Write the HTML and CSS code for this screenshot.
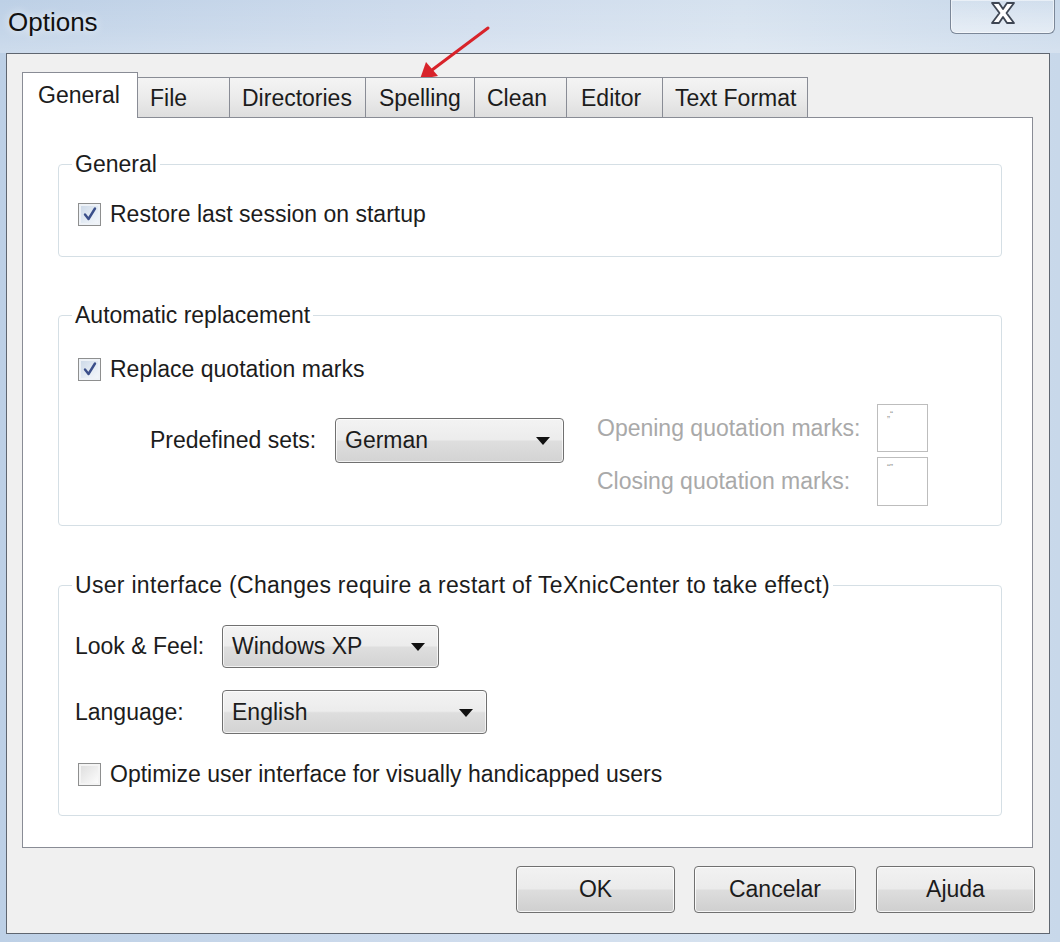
FILE: index.html
```html
<!DOCTYPE html>
<html>
<head>
<meta charset="utf-8">
<link rel="stylesheet" href="styles.css">
</head>
<body>
<div class="window">
  <div class="titlebar">
    <span class="title">Options</span>
    <div class="close">
      <svg width="28" height="24" viewBox="0 0 28 24"><path d="M3 2 H10 L14 8 L18 2 H25 L17.5 12 L25 22 H18 L14 16 L10 22 H3 L10.5 12 Z" fill="#fff" stroke="#3f4754" stroke-width="1.8" stroke-linejoin="round"/></svg>
    </div>
  </div>
  <div class="dialog">
    <div class="tabs">
      <div class="tab active t-general">General</div>
      <div class="tab t-file">File</div>
      <div class="tab t-dir">Directories</div>
      <div class="tab t-spell">Spelling</div>
      <div class="tab t-clean">Clean</div>
      <div class="tab t-editor">Editor</div>
      <div class="tab t-text">Text Format</div>
    </div>
    <div class="panel">
      <fieldset class="group g1">
        <legend>General</legend>
        <div class="check"><span class="box checked"><svg width="16" height="16" viewBox="0 0 16 16"><path d="M3 8.5 L6.5 13 L13 2.5" fill="none" stroke="#3b4f8a" stroke-width="2.4" stroke-linecap="round" stroke-linejoin="round"/></svg></span>Restore last session on startup</div>
      </fieldset>
      <fieldset class="group g2">
        <legend>Automatic replacement</legend>
        <div class="check"><span class="box checked"><svg width="16" height="16" viewBox="0 0 16 16"><path d="M3 8.5 L6.5 13 L13 2.5" fill="none" stroke="#3b4f8a" stroke-width="2.4" stroke-linecap="round" stroke-linejoin="round"/></svg></span>Replace quotation marks</div>
        <div class="quotes">
          <div class="preset">
            <span class="pre-label">Predefined sets:</span>
            <div class="combo c-pre">German<span class="arrow"></span></div>
          </div>
          <div class="marks">
            <span class="dis">Opening quotation marks:</span>
            <div class="qbox">„“</div>
            <span class="dis">Closing quotation marks:</span>
            <div class="qbox">“”</div>
          </div>
        </div>
      </fieldset>
      <fieldset class="group g3">
        <legend>User interface (Changes require a restart of TeXnicCenter to take effect)</legend>
        <div class="row">
          <span class="row-label">Look &amp; Feel:</span>
          <div class="combo c-look">Windows XP<span class="arrow"></span></div>
        </div>
        <div class="row r-lang">
          <span class="row-label">Language:</span>
          <div class="combo c-lang">English<span class="arrow"></span></div>
        </div>
        <div class="check c-last"><span class="box"></span>Optimize user interface for visually handicapped users</div>
      </fieldset>
    </div>
    <div class="buttons">
      <div class="btn b-ok">OK</div>
      <div class="btn b-cancel">Cancelar</div>
      <div class="btn b-help">Ajuda</div>
    </div>
  </div>
  <svg class="red-arrow" width="90" height="70" viewBox="0 0 90 70">
    <line x1="78" y1="8" x2="22" y2="50" stroke="#d8232a" stroke-width="3" stroke-linecap="round"/>
    <path d="M10 59 L16 42 L28 56 Z" fill="#d8232a"/>
  </svg>
</div>
</body>
</html>
```
FILE: styles.css
```css
* { box-sizing: border-box; }
html, body { margin: 0; padding: 0; }
body {
  width: 1060px;
  height: 942px;
  overflow: hidden;
  font-family: "Liberation Sans", Arial, sans-serif;
  font-size: 23px;
  color: #1c1c1c;
  background: #c9d8ea;
}
.window {
  position: relative;
  width: 1060px;
  height: 942px;
  display: flex;
  flex-direction: column;
  background: linear-gradient(to right, #bdd0e6 0%, #cfdced 45%, #d6e2ef 70%, #c8d8ea 100%);
}
.titlebar {
  height: 53px;
  display: flex;
  align-items: flex-start;
  padding-left: 8px;
  background: linear-gradient(to bottom, rgba(255,255,255,0) 0%, rgba(255,255,255,0.12) 60%, rgba(255,255,255,0.25) 100%);
}
.title {
  margin-top: 6px;
  font-size: 26px;
  line-height: 32px;
  color: #111;
  text-shadow: 0 0 8px rgba(255,255,255,0.9);
}
.close {
  margin-left: auto;
  margin-right: 5px;
  width: 105px;
  height: 34px;
  border: 1px solid #7b8798;
  border-top: none;
  border-radius: 0 0 6px 6px;
  background: linear-gradient(to bottom, rgba(255,255,255,0.15), rgba(255,255,255,0.45));
  box-shadow: inset 0 0 0 1px rgba(255,255,255,0.5);
  display: flex;
  align-items: center;
  justify-content: center;
  padding-bottom: 8px;
}
.dialog {
  margin: 0 10px 0 6px;
  height: 881px;
  border: 1px solid #5f6670;
  background: #f0f0f0;
  padding: 18px 16px 20px 15px;
  display: flex;
  flex-direction: column;
}
.tabs {
  display: flex;
  align-items: flex-end;
  height: 45px;
  position: relative;
  z-index: 1;
}
.tab {
  height: 40px;
  border: 1px solid #898c95;
  border-bottom: none;
  border-left: none;
  background: linear-gradient(to bottom, #f4f4f4 0%, #ebebeb 50%, #dedede 100%);
  padding-left: 12px;
  line-height: 40px;
  white-space: nowrap;
}
.tab.active {
  height: 46px;
  margin-bottom: -1px;
  background: #fff;
  border-left: 1px solid #898c95;
  padding-left: 15px;
  line-height: 44px;
}
.t-general { width: 116px; }
.t-file { width: 92px; }
.t-dir { width: 136px; }
.t-spell { width: 109px; padding-left: 13px; }
.t-clean { width: 92px; }
.t-editor { width: 96px; padding-left: 14px; }
.t-text { width: 145px; }
.panel {
  height: 732px;
  background: #fff;
  border: 1px solid #898c95;
  padding: 33px 30px 0 35px;
  display: flex;
  flex-direction: column;
}
.group {
  margin: 0;
  min-width: 0;
  border: 1px solid #d5dfe5;
  border-radius: 4px;
  padding: 0 20px 0 16px;
}
.group legend {
  padding: 0 3px;
  margin-left: -3px;
  line-height: 26px;
}
.g1 { padding-top: 24px; padding-bottom: 29px; }
.g2 { margin-top: 45px; padding-top: 28px; padding-bottom: 19px; }
.g3 { margin-top: 46px; padding-top: 27px; padding-bottom: 28px; }
.g3 legend { letter-spacing: 0.3px; }
.check {
  display: flex;
  align-items: center;
  height: 26px;
  line-height: 26px;
  margin-left: 3px;
}
.box {
  width: 23px;
  height: 23px;
  border: 1px solid #8e8f8f;
  background: linear-gradient(135deg, #dcdcdc 0%, #f4f4f4 70%, #ffffff 100%);
  box-shadow: inset 0 0 0 2px #f4f4f4;
  margin-right: 9px;
  display: flex;
  align-items: center;
  justify-content: center;
  flex: none;
}
.box.checked {
  background: linear-gradient(135deg, #c9d6e6 0%, #e6edf5 60%, #f6f8fb 100%);
  box-shadow: inset 0 0 0 2px #eef2f7;
}
.quotes {
  display: flex;
  margin-top: 22px;
}
.preset {
  display: flex;
  align-items: center;
  margin-left: 75px;
  margin-top: 14px;
  height: 45px;
}
.pre-label { width: 185px; }
.combo {
  position: relative;
  height: 45px;
  border: 1px solid #707070;
  border-radius: 4px;
  background: linear-gradient(to bottom, #f3f3f3 0%, #ececec 48%, #dedede 52%, #d3d3d3 100%);
  box-shadow: inset 0 0 0 1px rgba(255,255,255,0.7);
  padding-left: 9px;
  line-height: 43px;
}
.arrow {
  position: absolute;
  right: 13px;
  top: 18px;
  width: 0;
  height: 0;
  border-left: 7px solid transparent;
  border-right: 7px solid transparent;
  border-top: 8px solid #111;
}
.c-pre { width: 229px; }
.c-look { width: 217px; height: 43px; line-height: 41px; }
.c-look .arrow { top: 17px; }
.c-lang { width: 265px; height: 44px; line-height: 42px; }
.marks {
  margin-left: 33px;
  display: grid;
  grid-template-columns: 280px 51px;
  grid-template-rows: 48px 49px;
  row-gap: 5px;
  align-items: center;
}
.dis { color: #a9a9a9; }
.qbox {
  height: 100%;
  border: 1px solid #bdbdbd;
  background: #fff;
  font-size: 9px;
  line-height: 12px;
  color: #999;
  padding: 3px 0 0 9px;
}
.row {
  display: flex;
  align-items: center;
}
.row-label { width: 147px; }
.r-lang { margin-top: 22px; }
.c-last { margin-top: 27px; }
.buttons {
  display: flex;
  justify-content: flex-end;
  margin-top: 18px;
  margin-right: -2px;
}
.btn {
  width: 159px;
  height: 47px;
  border: 1px solid #707070;
  border-radius: 4px;
  background: linear-gradient(to bottom, #f2f2f2 0%, #ebebeb 48%, #dddddd 52%, #cfcfcf 100%);
  box-shadow: inset 0 0 0 1px rgba(255,255,255,0.8);
  text-align: center;
  line-height: 45px;
}
.b-cancel { width: 162px; margin-left: 19px; }
.b-help { margin-left: 20px; }
.red-arrow {
  position: absolute;
  left: 410px;
  top: 20px;
}
```
